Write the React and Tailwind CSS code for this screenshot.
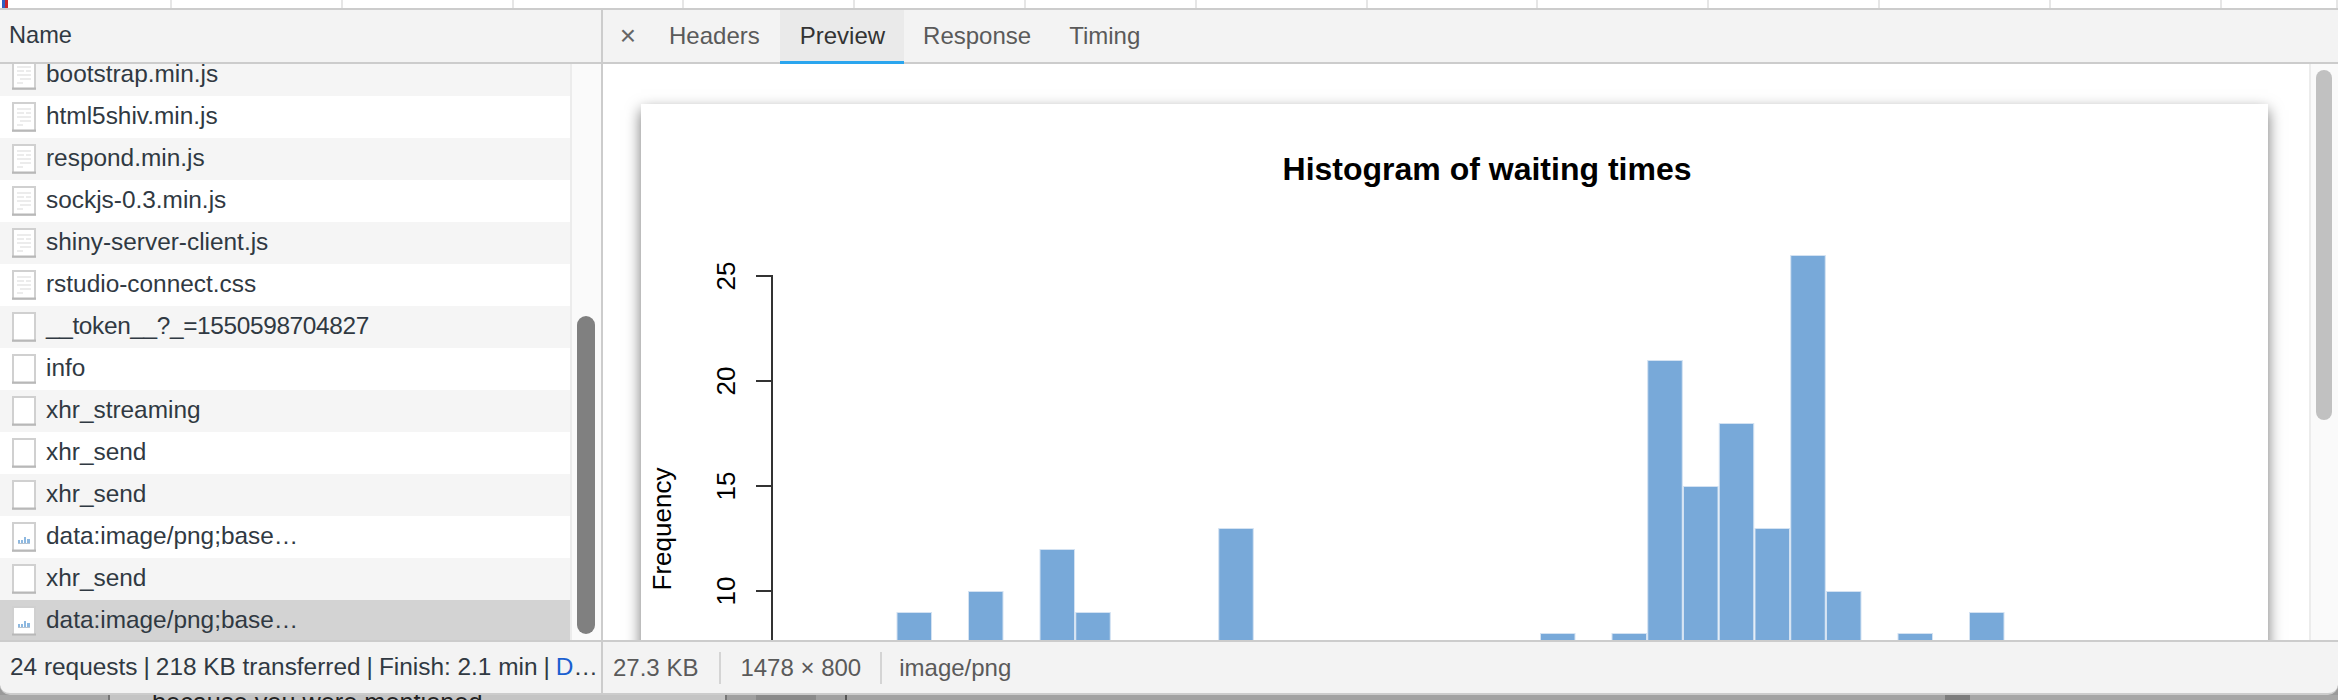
const sans = "font-['Liberation_Sans',Arial,sans-serif]";

const rows = [
  ["bootstrap.min.js", "js"],
  ["html5shiv.min.js", "js"],
  ["respond.min.js", "js"],
  ["sockjs-0.3.min.js", "js"],
  ["shiny-server-client.js", "js"],
  ["rstudio-connect.css", "js"],
  ["__token__?_=1550598704827", "blank"],
  ["info", "blank"],
  ["xhr_streaming", "blank"],
  ["xhr_send", "blank"],
  ["xhr_send", "blank"],
  ["data:image/png;base…", "img"],
  ["xhr_send", "blank"],
  ["data:image/png;base…", "img"],
];

const bars = [
  [0, 9], [2, 10], [4, 12], [5, 9], [9, 13], [18, 8], [20, 8], [21, 21], [22, 15],
  [23, 18], [24, 13], [25, 26], [26, 10], [28, 8], [30, 9],
];

function FileIcon({ kind }) {
  return (
    <svg width="24" height="30" viewBox="0 0 24 30" className="shrink-0">
      <rect x="1" y="1" width="22" height="28" fill="#fff" stroke="#d0d0d0" strokeWidth="2" />
      <line x1="0" y1="28.5" x2="24" y2="28.5" stroke="#b8b8b8" strokeWidth="2" />
      {kind === "js" && (
        <g stroke="#ececec" strokeWidth="2">
          <line x1="5" y1="7" x2="19" y2="7" />
          <line x1="5" y1="11" x2="12" y2="11" />
          <line x1="14" y1="11" x2="19" y2="11" />
          <line x1="5" y1="15" x2="19" y2="15" />
          <line x1="8" y1="19" x2="19" y2="19" />
          <line x1="5" y1="23" x2="11" y2="23" />
        </g>
      )}
      {kind === "img" && (
        <g fill="#8db8e0">
          <rect x="6" y="18" width="2" height="3" />
          <rect x="9" y="18" width="2" height="3" />
          <rect x="12" y="15" width="2" height="6" />
          <rect x="15" y="17" width="3" height="4" />
          <rect x="6" y="21" width="12" height="1" fill="#b8c4d0" />
        </g>
      )}
    </svg>
  );
}

function Chart() {
  const x = (k) => 897 - 641 + k * 35.75;
  const y = (v) => 801 - 104 - v * 21;
  const font = "'Liberation Sans', Arial, sans-serif";
  return (
    <svg width="1627" height="880" viewBox="0 0 1627 880" className="block">
      <text x="846" y="76" textAnchor="middle" fontSize="32" fontWeight="700" fill="#000" fontFamily={font}>
        Histogram of waiting times
      </text>
      <line x1="131" y1={y(5)} x2="131" y2={y(25) - 1} stroke="#333" strokeWidth="2" />
      {[25, 20, 15, 10].map((v) => (
        <g key={v}>
          <line x1="115" x2="131" y1={y(v)} y2={y(v)} stroke="#333" strokeWidth="2" />
          <text transform={`translate(94 ${y(v)}) rotate(-90)`} textAnchor="middle" fontSize="26" fill="#000" fontFamily={font}>
            {v}
          </text>
        </g>
      ))}
      <text transform="translate(30 425) rotate(-90)" textAnchor="middle" fontSize="26" fill="#000" fontFamily={font}>
        Frequency
      </text>
      {bars.map(([k, v]) => (
        <rect key={k} x={x(k)} y={y(v) + 0.5} width="34.5" height={v * 21} fill="#78a9d9" stroke="#d3e2f2" strokeWidth="1" />
      ))}
    </svg>
  );
}

export default function App() {
  return (
    <div className={`h-[700px] w-[2338px] overflow-hidden bg-[#9a9a9a] ${sans}`}>
      <div className="h-[700px]">
        <div className="flex h-[8px] bg-white">
          <div className="relative w-[172px] shrink-0 border-r-2 border-[#e6e6e6]">
            <div className="absolute left-[2px] top-0 h-full w-[3px] bg-[#2f5fc4]" />
            <div className="absolute left-[5px] top-0 h-full w-[3px] bg-[#c8242b]" />
          </div>
          {Array.from({ length: 12 }).map((_, i) => (
            <div key={i} className="w-[170.8px] shrink-0 border-r-2 border-[#e6e6e6]" />
          ))}
          <div className="flex-1 border-r-2 border-[#e6e6e6]" />
        </div>

        <div className="flex h-[687px] flex-col overflow-hidden rounded-b-[10px] border-t-2 border-b-2 border-[#cccccc] bg-[#f3f3f3]">
          <div className="flex min-h-0 flex-1">
            {/* left pane */}
            <div className="flex w-[603px] shrink-0 flex-col border-r-2 border-[#cccccc]">
              <div className="flex h-[54px] shrink-0 items-center border-b-2 border-[#cccccc] bg-[#f3f3f3] pl-[9px] text-[23.6px] text-[#303942]">
                Name
              </div>
              <div className="flex min-h-0 flex-1">
                <div className="w-[570px] shrink-0 overflow-hidden bg-white">
                  <div className="-mt-[10px]">
                    {rows.map(([name, kind], i) => (
                      <div
                        key={i}
                        className={`flex h-[42px] items-center gap-[10px] pl-[12px] text-[24.4px] text-[#303942] ${
                          i === 13 ? "bg-[#d3d3d3]" : i % 2 === 0 ? "bg-[#f5f5f5]" : "bg-white"
                        }`}
                      >
                        <FileIcon kind={kind} />
                        <span className={i === 6 ? "pb-[2px] tracking-[-0.35px]" : "pb-[2px]"}>{name}</span>
                      </div>
                    ))}
                  </div>
                </div>
                <div className="flex-1 border-l-2 border-[#ececec] bg-[#fafafa] pl-[5px] pt-[252px]">
                  <div className="h-[318px] w-[18px] rounded-full bg-[#808080]" />
                </div>
              </div>
              <div className="flex h-[53px] shrink-0 items-center whitespace-nowrap border-t-2 border-[#cccccc] pl-[10px] text-[24.4px] text-[#303942]">
                24 requests <span className="mx-[6px]">|</span> 218 KB transferred <span className="mx-[6px]">|</span> Finish: 2.1 min <span className="mx-[6px]">|</span>
                <span className="text-[#1a5fd0]">D</span>…
              </div>
            </div>

            {/* right pane */}
            <div className="flex min-w-0 flex-1 flex-col">
              <div className="flex h-[54px] shrink-0 items-stretch border-b-2 border-[#cccccc] text-[24px] text-[#5a5a5a]">
                <div className="flex w-[46px] items-center justify-center pl-[4px] text-[28px] text-[#666]">×</div>
                <div className="flex items-center px-[20px]">Headers</div>
                <div className="-mb-[2px] flex items-center border-b-[3px] border-[#2aa5ee] bg-[#eaeaea] pl-[20px] pr-[19px] text-[#333333]">
                  Preview
                </div>
                <div className="flex items-center px-[19px]">Response</div>
                <div className="flex items-center px-[19px]">Timing</div>
              </div>
              <div className="flex min-h-0 flex-1 overflow-hidden bg-white">
                <div className="min-w-0 flex-1 overflow-hidden pl-[38px] pt-[40px]">
                  <div className="w-[1627px] bg-white shadow-[0_6px_14px_rgba(0,0,0,0.55)]">
                    <Chart />
                  </div>
                </div>
                <div className="w-[29px] shrink-0 border-l-2 border-[#ececec] bg-[#fafafa] pl-[5px] pt-[6px]">
                  <div className="h-[350px] w-[16px] rounded-full bg-[#c1c1c1]" />
                </div>
              </div>
              <div className="flex h-[53px] shrink-0 items-center border-t-2 border-[#cccccc] pt-[1px] text-[24px] text-[#5a5a5a]">
                <div className="flex h-[32px] items-center border-r-2 border-[#d4d4d4] pl-[10px] pr-[21px]">27.3 KB</div>
                <div className="flex h-[32px] items-center border-r-2 border-[#d4d4d4] px-[19px]">1478 × 800</div>
                <div className="flex h-[32px] items-center pl-[17px]">image/png</div>
              </div>
            </div>
          </div>
        </div>

        {/* the page behind the docked panel, showing below it */}
        <div className="relative flex h-[5px] overflow-hidden">
          <div className="w-[110px] shrink-0 border-r-2 border-[#777] bg-[#a8a8a8]" />
          <div className="w-[617px] shrink-0 border-r-2 border-[#777] bg-[#c4c4c4] pl-[42px] text-[25.3px] leading-[14px] text-[#222]">
            because you were mentioned
          </div>
          <div className="w-[29px] shrink-0 bg-[#a0a0a0]" />
          <div className="w-[60px] shrink-0 bg-[#8a8a8a]" />
          <div className="w-[31px] shrink-0 border-r-2 border-[#555] bg-[#a0a0a0]" />
          <div className="w-[1098px] shrink-0 bg-[#a2a2a2]" />
          <div className="w-[25px] shrink-0 bg-[#7d7d7d]" />
          <div className="flex-1 bg-[#a6a6a6]" />
        </div>
      </div>
    </div>
  );
}
